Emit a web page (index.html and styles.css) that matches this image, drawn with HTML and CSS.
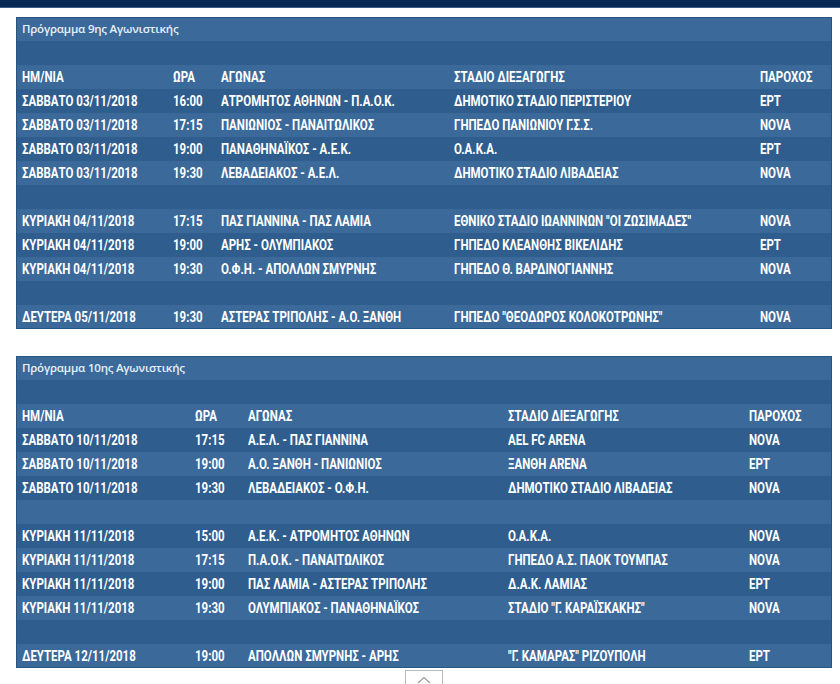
FILE: index.html
```html
<!DOCTYPE html>
<html lang="el">
<head>
<meta charset="utf-8">
<link rel="stylesheet" href="styles.css">
</head>
<body>
<div class="topbar"></div>
<main class="content">
  <table class="sched s9">
    <colgroup><col class="c1"><col class="c2"><col class="c3"><col class="c4"><col class="c5"></colgroup>
    <tr class="title"><td colspan="5">Πρόγραμμα 9ης Αγωνιστικής</td></tr>
    <tr class="blank"><td colspan="5"></td></tr>
    <tr class="head"><td><span>ΗΜ/ΝΙΑ</span></td><td><span>ΩΡΑ</span></td><td><span>ΑΓΩΝΑΣ</span></td><td><span>ΣΤΑΔΙΟ ΔΙΕΞΑΓΩΓΗΣ</span></td><td><span>ΠΑΡΟΧΟΣ</span></td></tr>
    <tr><td><span>ΣΑΒΒΑΤΟ 03/11/2018</span></td><td><span>16:00</span></td><td><span>ΑΤΡΟΜΗΤΟΣ ΑΘΗΝΩΝ - Π.Α.Ο.Κ.</span></td><td><span>ΔΗΜΟΤΙΚΟ ΣΤΑΔΙΟ ΠΕΡΙΣΤΕΡΙΟΥ</span></td><td><span>ΕΡΤ</span></td></tr>
    <tr><td><span>ΣΑΒΒΑΤΟ 03/11/2018</span></td><td><span>17:15</span></td><td><span>ΠΑΝΙΩΝΙΟΣ - ΠΑΝΑΙΤΩΛΙΚΟΣ</span></td><td><span>ΓΗΠΕΔΟ ΠΑΝΙΩΝΙΟΥ Γ.Σ.Σ.</span></td><td><span>NOVA</span></td></tr>
    <tr><td><span>ΣΑΒΒΑΤΟ 03/11/2018</span></td><td><span>19:00</span></td><td><span>ΠΑΝΑΘΗΝΑΪΚΟΣ - Α.Ε.Κ.</span></td><td><span>Ο.Α.Κ.Α.</span></td><td><span>ΕΡΤ</span></td></tr>
    <tr><td><span>ΣΑΒΒΑΤΟ 03/11/2018</span></td><td><span>19:30</span></td><td><span>ΛΕΒΑΔΕΙΑΚΟΣ - Α.Ε.Λ.</span></td><td><span>ΔΗΜΟΤΙΚΟ ΣΤΑΔΙΟ ΛΙΒΑΔΕΙΑΣ</span></td><td><span>NOVA</span></td></tr>
    <tr class="blank"><td colspan="5"></td></tr>
    <tr><td><span>ΚΥΡΙΑΚΗ 04/11/2018</span></td><td><span>17:15</span></td><td><span>ΠΑΣ ΓΙΑΝΝΙΝΑ - ΠΑΣ ΛΑΜΙΑ</span></td><td><span>ΕΘΝΙΚΟ ΣΤΑΔΙΟ ΙΩΑΝΝΙΝΩΝ "ΟΙ ΖΩΣΙΜΑΔΕΣ"</span></td><td><span>NOVA</span></td></tr>
    <tr><td><span>ΚΥΡΙΑΚΗ 04/11/2018</span></td><td><span>19:00</span></td><td><span>ΑΡΗΣ - ΟΛΥΜΠΙΑΚΟΣ</span></td><td><span>ΓΗΠΕΔΟ ΚΛΕΑΝΘΗΣ ΒΙΚΕΛΙΔΗΣ</span></td><td><span>ΕΡΤ</span></td></tr>
    <tr><td><span>ΚΥΡΙΑΚΗ 04/11/2018</span></td><td><span>19:30</span></td><td><span>Ο.Φ.Η. - ΑΠΟΛΛΩΝ ΣΜΥΡΝΗΣ</span></td><td><span>ΓΗΠΕΔΟ Θ. ΒΑΡΔΙΝΟΓΙΑΝΝΗΣ</span></td><td><span>NOVA</span></td></tr>
    <tr class="blank"><td colspan="5"></td></tr>
    <tr><td><span>ΔΕΥΤΕΡΑ 05/11/2018</span></td><td><span>19:30</span></td><td><span>ΑΣΤΕΡΑΣ ΤΡΙΠΟΛΗΣ - Α.Ο. ΞΑΝΘΗ</span></td><td><span>ΓΗΠΕΔΟ "ΘΕΟΔΩΡΟΣ ΚΟΛΟΚΟΤΡΩΝΗΣ"</span></td><td><span>NOVA</span></td></tr>
  </table>

  <table class="sched s10">
    <colgroup><col class="c1"><col class="c2"><col class="c3"><col class="c4"><col class="c5"></colgroup>
    <tr class="title"><td colspan="5">Πρόγραμμα 10ης Αγωνιστικής</td></tr>
    <tr class="blank"><td colspan="5"></td></tr>
    <tr class="head"><td><span>ΗΜ/ΝΙΑ</span></td><td><span>ΩΡΑ</span></td><td><span>ΑΓΩΝΑΣ</span></td><td><span>ΣΤΑΔΙΟ ΔΙΕΞΑΓΩΓΗΣ</span></td><td><span>ΠΑΡΟΧΟΣ</span></td></tr>
    <tr><td><span>ΣΑΒΒΑΤΟ 10/11/2018</span></td><td><span>17:15</span></td><td><span>Α.Ε.Λ. - ΠΑΣ ΓΙΑΝΝΙΝΑ</span></td><td><span>AEL FC ARENA</span></td><td><span>NOVA</span></td></tr>
    <tr><td><span>ΣΑΒΒΑΤΟ 10/11/2018</span></td><td><span>19:00</span></td><td><span>Α.Ο. ΞΑΝΘΗ - ΠΑΝΙΩΝΙΟΣ</span></td><td><span>ΞΑΝΘΗ ARENA</span></td><td><span>ΕΡΤ</span></td></tr>
    <tr><td><span>ΣΑΒΒΑΤΟ 10/11/2018</span></td><td><span>19:30</span></td><td><span>ΛΕΒΑΔΕΙΑΚΟΣ - Ο.Φ.Η.</span></td><td><span>ΔΗΜΟΤΙΚΟ ΣΤΑΔΙΟ ΛΙΒΑΔΕΙΑΣ</span></td><td><span>NOVA</span></td></tr>
    <tr class="blank"><td colspan="5"></td></tr>
    <tr><td><span>ΚΥΡΙΑΚΗ 11/11/2018</span></td><td><span>15:00</span></td><td><span>Α.Ε.Κ. - ΑΤΡΟΜΗΤΟΣ ΑΘΗΝΩΝ</span></td><td><span>Ο.Α.Κ.Α.</span></td><td><span>NOVA</span></td></tr>
    <tr><td><span>ΚΥΡΙΑΚΗ 11/11/2018</span></td><td><span>17:15</span></td><td><span>Π.Α.Ο.Κ. - ΠΑΝΑΙΤΩΛΙΚΟΣ</span></td><td><span>ΓΗΠΕΔΟ Α.Σ. ΠΑΟΚ ΤΟΥΜΠΑΣ</span></td><td><span>NOVA</span></td></tr>
    <tr><td><span>ΚΥΡΙΑΚΗ 11/11/2018</span></td><td><span>19:00</span></td><td><span>ΠΑΣ ΛΑΜΙΑ - ΑΣΤΕΡΑΣ ΤΡΙΠΟΛΗΣ</span></td><td><span>Δ.Α.Κ. ΛΑΜΙΑΣ</span></td><td><span>ΕΡΤ</span></td></tr>
    <tr><td><span>ΚΥΡΙΑΚΗ 11/11/2018</span></td><td><span>19:30</span></td><td><span>ΟΛΥΜΠΙΑΚΟΣ - ΠΑΝΑΘΗΝΑΪΚΟΣ</span></td><td><span>ΣΤΑΔΙΟ "Γ. ΚΑΡΑΪΣΚΑΚΗΣ"</span></td><td><span>NOVA</span></td></tr>
    <tr class="blank"><td colspan="5"></td></tr>
    <tr><td><span>ΔΕΥΤΕΡΑ 12/11/2018</span></td><td><span>19:00</span></td><td><span>ΑΠΟΛΛΩΝ ΣΜΥΡΝΗΣ - ΑΡΗΣ</span></td><td><span>"Γ. ΚΑΜΑΡΑΣ" ΡΙΖΟΥΠΟΛΗ</span></td><td><span>ΕΡΤ</span></td></tr>
  </table>

  <div class="totop">
    <button class="totop-btn" aria-label="Πάνω">
      <svg width="14" height="8" viewBox="0 0 14 8"><path d="M1 7 L7 1.5 L13 7" fill="none" stroke="#9a9a9a" stroke-width="1.2"/></svg>
    </button>
  </div>
</main>
</body>
</html>
```

FILE: styles.css
```css
html, body {
  margin: 0;
  padding: 0;
  background: #ffffff;
}

.topbar {
  height: 7px;
  background: #082a55;
  border-bottom: 1px solid #3c5f86;
}

.content {
  padding: 9px 8px 0 16px;
  display: flex;
  flex-direction: column;
  gap: 27px;
}

.sched {
  width: 816px;
  border-collapse: collapse;
  table-layout: fixed;
  font-family: Roboto, "Liberation Sans", sans-serif;
  font-weight: bold;
  font-size: 14px;
  color: #ffffff;
  outline: 1px solid #2a5480;
  outline-offset: -1px;
}

.sched tr {
  height: 24px;
}

.sched tr:nth-child(odd) {
  background: #3a699a;
}

.sched tr:nth-child(even) {
  background: #2f5e8e;
}

.sched td {
  padding: 0 0 0 6px;
  white-space: nowrap;
  overflow: hidden;
  vertical-align: middle;
  line-height: 24px;
}

.sched td > span {
  display: inline-block;
  transform: scaleX(0.82);
  transform-origin: 0 50%;
}

.sched .title td {
  font-family: "Open Sans", "Liberation Sans", sans-serif;
  font-weight: 600;
  font-size: 11.5px;
  letter-spacing: -0.2px;
  color: #e6f0fa;
}

.s9 .c1 { width: 151px; }
.s9 .c2 { width: 48px; }
.s9 .c3 { width: 233px; }
.s9 .c4 { width: 306px; }
.s9 .c5 { width: 78px; }

.s10 .c1 { width: 173px; }
.s10 .c2 { width: 53px; }
.s10 .c3 { width: 260px; }
.s10 .c4 { width: 241px; }
.s10 .c5 { width: 89px; }

.totop {
  display: flex;
  justify-content: center;
  margin-top: -25px;
  padding-bottom: 10px;
}

.totop-btn {
  width: 38px;
  height: 18px;
  border: 1px solid #b9b9b9;
  border-bottom: none;
  background: #ffffff;
  padding: 0;
  display: flex;
  align-items: center;
  justify-content: center;
}
```
